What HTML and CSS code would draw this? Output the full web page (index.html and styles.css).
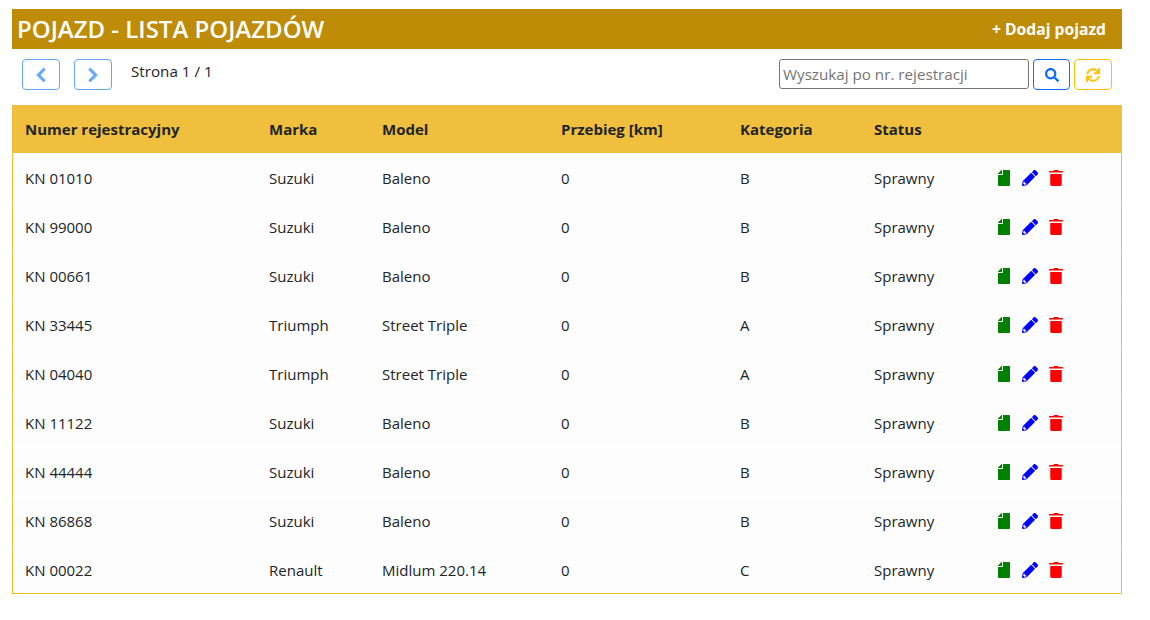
FILE: index.html
```html
<!DOCTYPE html>
<html lang="pl">
<head>
  <meta charset="UTF-8">
  <title>Pojazd - lista pojazdów</title>
  <link rel="stylesheet" href="styles.css">
</head>
<body>

  <svg class="sprites" width="0" height="0">
    <symbol id="i-left" viewBox="0 0 320 512"><path d="M34.52 239.03L228.87 44.69c9.37-9.37 24.57-9.37 33.94 0l22.67 22.67c9.36 9.36 9.37 24.52.04 33.9L131.49 256l154.02 154.75c9.34 9.38 9.32 24.54-.04 33.9l-22.67 22.67c-9.37 9.37-24.57 9.37-33.94 0L34.52 272.97c-9.37-9.37-9.37-24.57 0-33.94z"/></symbol>
    <symbol id="i-right" viewBox="0 0 320 512"><path d="M285.476 272.971L91.132 467.314c-9.373 9.373-24.569 9.373-33.941 0l-22.667-22.667c-9.357-9.357-9.375-24.522-.04-33.901L188.505 256 34.484 101.255c-9.335-9.379-9.317-24.544.04-33.901l22.667-22.667c9.373-9.373 24.569-9.373 33.941 0L285.475 239.03c9.373 9.372 9.373 24.568.001 33.941z"/></symbol>
    <symbol id="i-search" viewBox="0 0 512 512"><path d="M505 442.7L405.3 343c-4.5-4.5-10.6-7-17-7H372c27.6-35.3 44-79.7 44-128C416 93.1 322.9 0 208 0S0 93.1 0 208s93.1 208 208 208c48.3 0 92.7-16.4 128-44v16.3c0 6.4 2.5 12.5 7 17l99.7 99.7c9.4 9.4 24.6 9.4 33.9 0l28.3-28.3c9.4-9.4 9.4-24.6.1-34zM208 336c-70.7 0-128-57.2-128-128 0-70.7 57.2-128 128-128 70.7 0 128 57.2 128 128 0 70.7-57.2 128-128 128z"/></symbol>
    <symbol id="i-sync" viewBox="0 0 512 512"><path d="M440.65 12.57l4 82.77A247.16 247.16 0 0 0 255.83 8C134.73 8 33.91 94.92 12.29 209.82A12 12 0 0 0 24.09 224h49.05a12 12 0 0 0 11.67-9.26 175.91 175.91 0 0 1 317-56.94l-101.46-4.86a12 12 0 0 0-12.57 12v47.41a12 12 0 0 0 12 12H500a12 12 0 0 0 12-12V12a12 12 0 0 0-12-12h-47.37a12 12 0 0 0-11.98 12.57zM255.83 432a175.61 175.61 0 0 1-146-77.8l101.8 4.87a12 12 0 0 0 12.57-12v-47.4a12 12 0 0 0-12-12H12a12 12 0 0 0-12 12V500a12 12 0 0 0 12 12h47.35a12 12 0 0 0 12-12.6l-4.15-82.57A247.17 247.17 0 0 0 255.83 504c121.11 0 221.93-86.92 243.55-201.82a12 12 0 0 0-11.8-14.18h-49.05a12 12 0 0 0-11.67 9.26A175.86 175.86 0 0 1 255.83 432z"/></symbol>
    <symbol id="i-file" viewBox="0 0 384 512"><path d="M160 136V0h200c13.3 0 24 10.7 24 24v464c0 13.3-10.700 24-24 24H24c-13.300 0-24-10.700-24-24V160h136c13.200 0 24-10.800 24-24zM0 121.900V128h128V0h-6.100c-6.400 0-12.500 2.500-17 7L7 105c-4.500 4.500-7 10.600-7 16.900z"/></symbol>
    <symbol id="i-pencil" viewBox="0 0 512 512"><path d="M497.900 142.100l-46.100 46.100c-4.700 4.700-12.300 4.700-17 0l-111-111c-4.700-4.700-4.700-12.300 0-17l46.100-46.100c18.700-18.700 49.100-18.700 67.900 0l60.100 60.100c18.800 18.700 18.800 49.100 0 67.900zM284.200 99.800L21.600 362.400.4 483.900c-2.900 16.400 11.400 30.600 27.800 27.800l121.500-21.300 262.600-262.600c4.700-4.700 4.700-12.300 0-17l-111-111c-4.800-4.700-12.400-4.700-17.100 0zM88 424h48v36.300l-64.500 11.300-31.100-31.100L51.700 376H88v48z"/></symbol>
    <symbol id="i-trash" viewBox="0 0 448 512"><path d="M432 32H312l-9.400-18.700A24 24 0 0 0 281.100 0H166.800a23.720 23.720 0 0 0-21.400 13.300L136 32H16A16 16 0 0 0 0 48v26a8 8 0 0 0 8 8h432a8 8 0 0 0 8-8V48a16 16 0 0 0-16-16zM40 128v336a48 48 0 0 0 48 48h272a48 48 0 0 0 48-48V128z"/></symbol>
  </svg>

  <div class="page">
    <header class="title-bar">
      <h1>POJAZD - LISTA POJAZDÓW</h1>
      <a href="#" class="add-link">+ Dodaj pojazd</a>
    </header>

    <div class="toolbar">
      <button class="btn btn-page"><svg class="ico ico-page"><use href="#i-left"/></svg></button>
      <button class="btn btn-page"><svg class="ico ico-page"><use href="#i-right"/></svg></button>
      <span class="page-info">Strona 1 / 1</span>
      <div class="search">
        <input type="text" class="search-input" placeholder="Wyszukaj po nr. rejestracji">
        <button class="btn btn-search"><svg class="ico"><use href="#i-search"/></svg></button>
        <button class="btn btn-refresh"><svg class="ico"><use href="#i-sync"/></svg></button>
      </div>
    </div>

    <table class="vehicles">
      <thead>
        <tr>
          <th class="col-reg">Numer rejestracyjny</th>
          <th class="col-make">Marka</th>
          <th class="col-model">Model</th>
          <th class="col-km">Przebieg [km]</th>
          <th class="col-cat">Kategoria</th>
          <th class="col-status">Status</th>
          <th></th>
        </tr>
      </thead>
      <tbody>
        <tr><td>KN 01010</td><td>Suzuki</td><td>Baleno</td><td>0</td><td>B</td><td>Sprawny</td><td><span class="actions"><svg class="act act-file"><use href="#i-file"/></svg><svg class="act act-edit"><use href="#i-pencil"/></svg><svg class="act act-del"><use href="#i-trash"/></svg></span></td></tr>
        <tr><td>KN 99000</td><td>Suzuki</td><td>Baleno</td><td>0</td><td>B</td><td>Sprawny</td><td><span class="actions"><svg class="act act-file"><use href="#i-file"/></svg><svg class="act act-edit"><use href="#i-pencil"/></svg><svg class="act act-del"><use href="#i-trash"/></svg></span></td></tr>
        <tr><td>KN 00661</td><td>Suzuki</td><td>Baleno</td><td>0</td><td>B</td><td>Sprawny</td><td><span class="actions"><svg class="act act-file"><use href="#i-file"/></svg><svg class="act act-edit"><use href="#i-pencil"/></svg><svg class="act act-del"><use href="#i-trash"/></svg></span></td></tr>
        <tr><td>KN 33445</td><td>Triumph</td><td>Street Triple</td><td>0</td><td>A</td><td>Sprawny</td><td><span class="actions"><svg class="act act-file"><use href="#i-file"/></svg><svg class="act act-edit"><use href="#i-pencil"/></svg><svg class="act act-del"><use href="#i-trash"/></svg></span></td></tr>
        <tr><td>KN 04040</td><td>Triumph</td><td>Street Triple</td><td>0</td><td>A</td><td>Sprawny</td><td><span class="actions"><svg class="act act-file"><use href="#i-file"/></svg><svg class="act act-edit"><use href="#i-pencil"/></svg><svg class="act act-del"><use href="#i-trash"/></svg></span></td></tr>
        <tr><td>KN 11122</td><td>Suzuki</td><td>Baleno</td><td>0</td><td>B</td><td>Sprawny</td><td><span class="actions"><svg class="act act-file"><use href="#i-file"/></svg><svg class="act act-edit"><use href="#i-pencil"/></svg><svg class="act act-del"><use href="#i-trash"/></svg></span></td></tr>
        <tr><td>KN 44444</td><td>Suzuki</td><td>Baleno</td><td>0</td><td>B</td><td>Sprawny</td><td><span class="actions"><svg class="act act-file"><use href="#i-file"/></svg><svg class="act act-edit"><use href="#i-pencil"/></svg><svg class="act act-del"><use href="#i-trash"/></svg></span></td></tr>
        <tr><td>KN 86868</td><td>Suzuki</td><td>Baleno</td><td>0</td><td>B</td><td>Sprawny</td><td><span class="actions"><svg class="act act-file"><use href="#i-file"/></svg><svg class="act act-edit"><use href="#i-pencil"/></svg><svg class="act act-del"><use href="#i-trash"/></svg></span></td></tr>
        <tr><td>KN 00022</td><td>Renault</td><td>Midlum 220.14</td><td>0</td><td>C</td><td>Sprawny</td><td><span class="actions"><svg class="act act-file"><use href="#i-file"/></svg><svg class="act act-edit"><use href="#i-pencil"/></svg><svg class="act act-del"><use href="#i-trash"/></svg></span></td></tr>
      </tbody>
    </table>
  </div>

</body>
</html>
```

FILE: styles.css
```css
body {
  margin: 0;
  padding: 9px 28px 0 12px;
  font-family: "Open Sans", "Noto Sans", sans-serif;
  font-size: 15px;
  color: #212529;
  background-color: #fff;
}

.sprites {
  display: block;
  height: 0;
}

.title-bar {
  display: flex;
  align-items: center;
  justify-content: space-between;
  height: 40px;
  padding: 0 16px 0 5px;
  background-color: #bf8c07;
  color: #fff;
}

.title-bar h1 {
  margin: 0;
  font-size: 24px;
  font-weight: 600;
  line-height: 38px;
}

.add-link {
  color: #fff;
  font-size: 15.7px;
  font-weight: 700;
  text-decoration: none;
}

.toolbar {
  display: flex;
  align-items: flex-start;
  box-sizing: border-box;
  height: 56px;
  padding: 10px 10px 0;
}

.btn {
  display: flex;
  align-items: center;
  justify-content: center;
  height: 31px;
  padding: 0;
  background: #fff;
  border: 1px solid;
  border-radius: 4px;
}

.ico {
  width: 14px;
  height: 14px;
  fill: currentColor;
}

.ico-page {
  width: 16px;
  height: 16px;
  stroke: currentColor;
  stroke-width: 24px;
}

.btn-page {
  width: 38px;
  margin-right: 14px;
  color: #65a7fa;
  border-color: #65a7fa;
}

.page-info {
  margin-left: 5px;
  line-height: 24px;
  font-size: 15.2px;
}

.search {
  display: flex;
  gap: 4px;
  margin-left: auto;
}

.search-input {
  box-sizing: border-box;
  width: 250px;
  height: 30px;
  padding: 0 3px;
  font-family: inherit;
  font-size: 15.2px;
  border: 1px solid #767676;
  border-radius: 3px;
}

.search-input::placeholder {
  color: #757575;
}

.btn-search {
  width: 37px;
  color: #0d6efd;
  border-color: #0d6efd;
}

.btn-refresh {
  width: 38px;
  color: #ffc107;
  border-color: #ffc107;
}

.vehicles {
  width: 100%;
  table-layout: fixed;
  border-collapse: separate;
  border-spacing: 0;
}

.vehicles th {
  height: 48px;
  padding: 0 13px;
  background-color: #f0bf3d;
  font-weight: 700;
  text-align: left;
  box-sizing: border-box;
}

.col-reg { width: 244px; }
.col-make { width: 113px; }
.col-model { width: 179px; }
.col-km { width: 179px; }
.col-cat { width: 134px; }
.col-status { width: 122px; }

.vehicles td {
  box-sizing: border-box;
  height: 49px;
  padding: 0 13px;
  background-color: #fdfdfd;
  border-top: 1px solid #fff;
}

.vehicles td:first-child {
  padding-left: 12px;
  border-left: 1px solid #f4bd2a;
}

.vehicles td:last-child {
  border-right: 1px solid #f4bd2a;
}

.vehicles tr:last-child td {
  border-bottom: 1px solid #f4bd2a;
}

.actions {
  display: flex;
  align-items: center;
  gap: 10px;
}

.act {
  width: 16px;
  height: 16px;
}

.act-file { fill: #008000; }
.act-edit { fill: #0000ff; }
.act-del { fill: #ff0000; }
```
